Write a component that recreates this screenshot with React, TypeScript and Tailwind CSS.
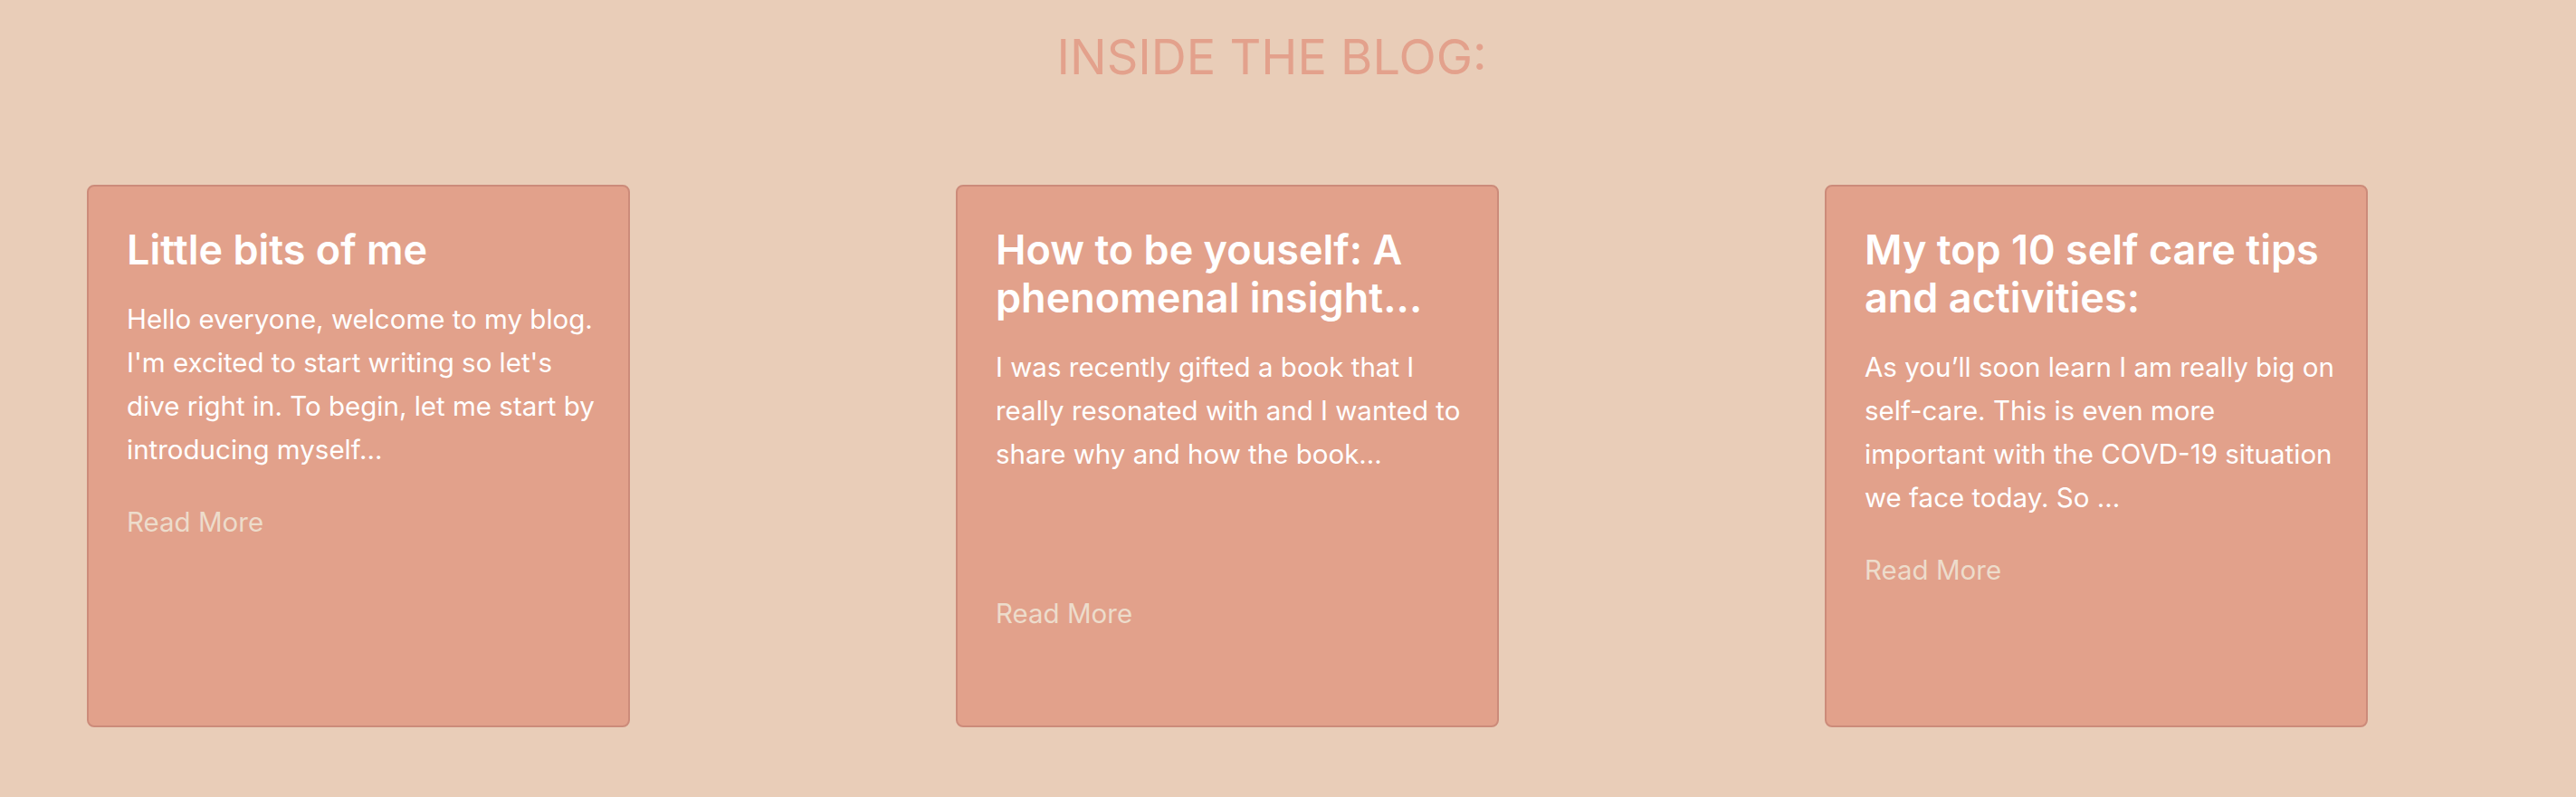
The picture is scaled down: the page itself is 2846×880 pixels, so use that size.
const posts = [
  {
    title: ["Little bits of me"],
    body: [
      "Hello everyone, welcome to my blog.",
      "I'm excited to start writing so let's",
      "dive right in. To begin, let me start by",
      "introducing myself...",
    ],
    spacer: false,
  },
  {
    title: ["How to be youself: A", "phenomenal insight..."],
    body: [
      "I was recently gifted a book that I",
      "really resonated with and I wanted to",
      "share why and how the book...",
    ],
    spacer: true,
  },
  {
    title: ["My top 10 self care tips", "and activities:"],
    body: [
      "As you\u2019ll soon learn I am really big on",
      "self-care. This is even more",
      "important with the COVD-19 situation",
      "we face today. So ...",
    ],
    spacer: false,
  },
];

function BlogCard({ post }: { post: (typeof posts)[number] }) {
  return (
    <div className="w-[600px] h-[599px] shrink-0 rounded-lg border-2 border-[#cc8b7a] bg-[#e2a18b] px-[42px] pt-[43px]">
      <h3 className="mb-[26px] text-[45px] font-semibold leading-[53px] text-white">
        {post.title.map((line) => (
          <span key={line} className="block whitespace-nowrap">
            {line}
          </span>
        ))}
      </h3>
      <p className="mb-[32px] text-[29.5px] leading-[48px] text-white">
        {post.body.map((line) => (
          <span key={line} className="block whitespace-nowrap">
            {line}
          </span>
        ))}
        {/* original post has two empty lines here */}
        {post.spacer && <span className="block h-[96px]" />}
      </p>
      <a href="#" className="text-[29.5px] leading-[48px] text-[#eddccb]">
        Read More
      </a>
    </div>
  );
}

export default function App() {
  return (
    <div
      className="min-h-screen w-full bg-[#e9cdb8] overflow-hidden"
      style={{ fontFamily: "Inter, 'Liberation Sans', sans-serif" }}
    >
      <section className="h-[880px]">
        <h2 className="pt-[31px] pr-[36px] text-center text-[54px] font-normal leading-[64px] text-[#e3a18c]">
          INSIDE THE BLOG:
        </h2>

        <div className="mt-[109px] flex gap-[360px] pl-[96px]">
          {posts.map((post) => (
            <BlogCard key={post.title[0]} post={post} />
          ))}
        </div>
      </section>
    </div>
  );
}
